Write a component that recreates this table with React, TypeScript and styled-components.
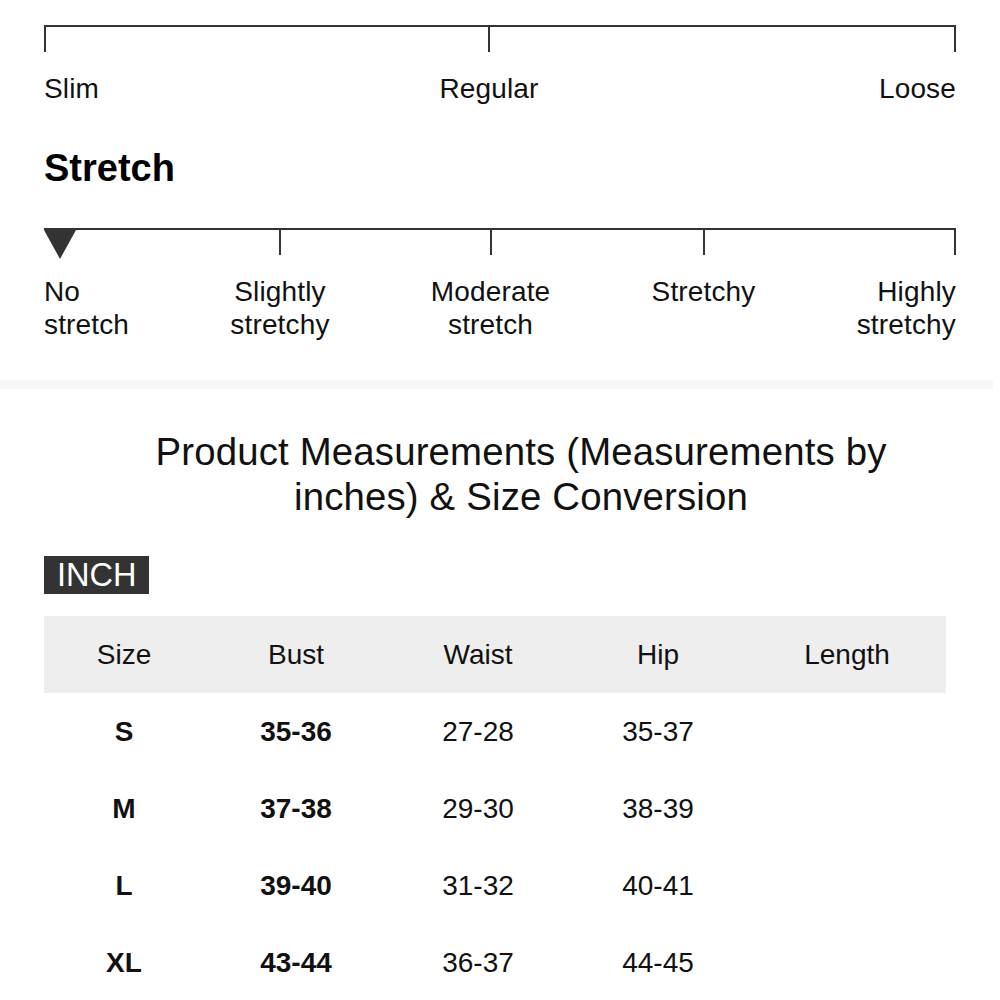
import React from "react";
import styled, { createGlobalStyle } from "styled-components";

const Global = createGlobalStyle`
  html, body { margin: 0; padding: 0; background: #ffffff; }
  body { font-family: "Liberation Sans", Arial, Helvetica, sans-serif; color: #111; }
`;

const Page = styled.div`
  display: flex;
  flex-direction: column;
  padding-top: 25px;
`;

const Section = styled.section`
  display: flex;
  flex-direction: column;
  padding: 0 44px;
`;

const Track = styled.div<{ $mt?: number }>`
  display: flex;
  justify-content: space-between;
  border-top: 2px solid #333;
  margin-top: ${(p) => p.$mt ?? 0}px;
`;

type Align = "start" | "center" | "end";

const Stop = styled.div<{ $align: Align }>`
  display: flex;
  flex-direction: column;
  align-items: ${(p) =>
    p.$align === "start" ? "flex-start" : p.$align === "end" ? "flex-end" : "center"};
  text-align: ${(p) => (p.$align === "start" ? "left" : p.$align === "end" ? "right" : "center")};
`;

const Tick = styled.div`
  width: 2px;
  height: 25px;
  background: #333;
`;

const Marker = styled.div`
  width: 0;
  height: 0;
  border-left: 16.5px solid transparent;
  border-right: 16.5px solid transparent;
  border-top: 29px solid #333;
  margin-bottom: -4px;
`;

const Label = styled.div`
  margin-top: 20px;
  font-size: 28px;
  line-height: 33px;
  color: #111;
  white-space: pre-line;
  letter-spacing: 0.15px;
`;

const Heading = styled.h2`
  margin: 41px 0 0;
  font-size: 38px;
  line-height: 44px;
  font-weight: 700;
  color: #000;
`;

const Band = styled.div`
  height: 9px;
  background: #f7f7f7;
  margin: 39px 7px 0 0;
`;

const Title = styled.h1`
  margin: 40px auto 0;
  width: 820px;
  padding-left: 42px;
  box-sizing: content-box;
  font-size: 38.4px;
  line-height: 45px;
  font-weight: 400;
  letter-spacing: 0.15px;
  text-align: center;
  color: #111;
`;

const UnitBadge = styled.div`
  align-self: flex-start;
  margin-top: 37px;
  height: 38px;
  padding: 0 13px 0 13px;
  background: #333;
  color: #fff;
  font-size: 32.5px;
  line-height: 38px;
`;

const Table = styled.div`
  margin-top: 22px;
  width: 902px;
  display: flex;
  flex-direction: column;
`;

const Row = styled.div<{ $head?: boolean }>`
  display: grid;
  grid-template-columns: 160px 184px 180px 180px 198px;
  height: 77px;
  align-items: center;
  background: ${(p) => (p.$head ? "#eeeeee" : "transparent")};
`;

const Cell = styled.div<{ $bold?: boolean }>`
  text-align: center;
  font-size: 28px;
  line-height: 32px;
  font-weight: ${(p) => (p.$bold ? 700 : 400)};
  color: #111;
`;

const stopAlign = (i: number, n: number): Align => (i === 0 ? "start" : i === n - 1 ? "end" : "center");

const fit = ["Slim", "Regular", "Loose"];
const stretch = ["No\nstretch", "Slightly\nstretchy", "Moderate\nstretch", "Stretchy", "Highly\nstretchy"];

const head = ["Size", "Bust", "Waist", "Hip", "Length"];
const rows = [
  ["S", "35-36", "27-28", "35-37", ""],
  ["M", "37-38", "29-30", "38-39", ""],
  ["L", "39-40", "31-32", "40-41", ""],
  ["XL", "43-44", "36-37", "44-45", ""],
];

export default function App() {
  return (
    <>
      <Global />
      <Page>
        <Section>
          <Track>
            {fit.map((l, i) => (
              <Stop key={l} $align={stopAlign(i, fit.length)}>
                <Tick />
                <Label>{l}</Label>
              </Stop>
            ))}
          </Track>
          <Heading>Stretch</Heading>
          <Track $mt={38}>
            {stretch.map((l, i) => (
              <Stop key={l} $align={stopAlign(i, stretch.length)}>
                {i === 0 ? <Marker /> : <Tick />}
                <Label>{l}</Label>
              </Stop>
            ))}
          </Track>
        </Section>
        <Band />
        <Section>
          <Title>Product Measurements (Measurements by inches) &amp; Size Conversion</Title>
          <UnitBadge>INCH</UnitBadge>
          <Table>
            <Row $head>
              {head.map((h) => (
                <Cell key={h}>{h}</Cell>
              ))}
            </Row>
            {rows.map((r) => (
              <Row key={r[0]}>
                {r.map((c, j) => (
                  <Cell key={j} $bold={j < 2}>
                    {c}
                  </Cell>
                ))}
              </Row>
            ))}
          </Table>
        </Section>
      </Page>
    </>
  );
}
